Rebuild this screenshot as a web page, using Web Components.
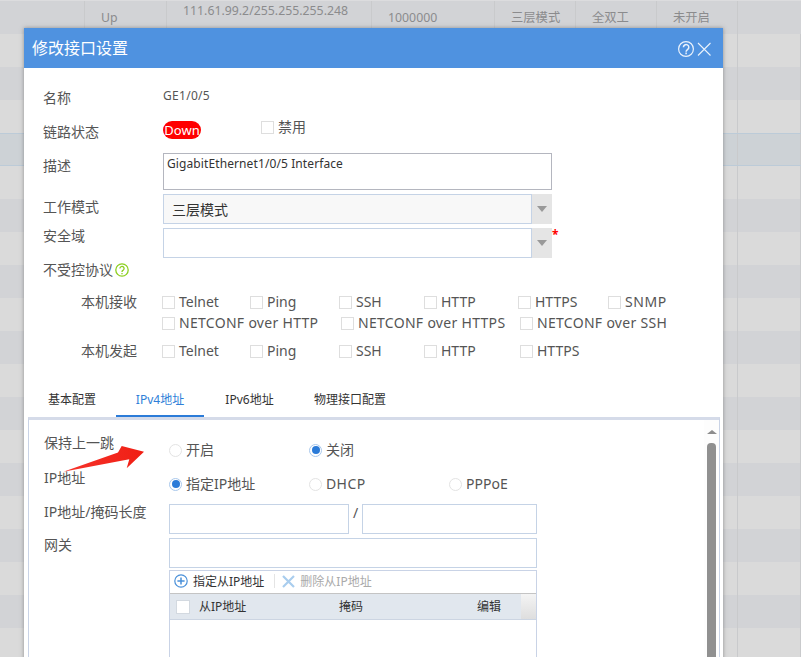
<!DOCTYPE html>
<html lang="zh">
<head>
<meta charset="utf-8">
<title>修改接口设置</title>
<style>
  html, body { margin: 0; height: 657px; overflow: hidden; }
  body { font-family: "Noto Sans", "Noto Sans CJK SC", sans-serif; font-size: 14px; color: #555; position: relative; }
</style>
</head>
<body>
<table-backdrop></table-backdrop>

<modal-dialog heading="修改接口设置">
  <form-row style="margin-top:12px;height:34px;--lt:8px;--vt:6px">
    <span slot="label">名称</span>
    <span style="font-size:12px;line-height:20px;display:block;letter-spacing:.3px">GE1/0/5</span>
  </form-row>
  <form-row style="height:34px;--lt:8px;--vt:7px">
    <span slot="label">链路状态</span>
    <link-state></link-state>
  </form-row>
  <form-row style="margin-top:5px;height:37px;--lt:3px">
    <span slot="label">描述</span>
    <text-box multiline style="letter-spacing:.1px">GigabitEthernet1/0/5 Interface</text-box>
  </form-row>
  <form-row style="margin-top:4px;height:30px;--lt:3px">
    <span slot="label">工作模式</span>
    <select-box disabled>三层模式</select-box>
  </form-row>
  <form-row style="margin-top:4px;height:30px;--lt:-2px">
    <span slot="label">安全域</span>
    <select-box required></select-box>
  </form-row>
  <form-row style="margin-top:2px;height:20px">
    <span slot="label" style="white-space:nowrap;display:flex;align-items:center;gap:2px">不受控协议<help-icon></help-icon></span>
  </form-row>

  <proto-row label="本机接收" style="margin-top:12px">
    <check-item style="width:88px">Telnet</check-item>
    <check-item style="width:89px">Ping</check-item>
    <check-item style="width:85px">SSH</check-item>
    <check-item style="width:94px">HTTP</check-item>
    <check-item style="width:90px">HTTPS</check-item>
    <check-item style="letter-spacing:.6px">SNMP</check-item>
  </proto-row>
  <proto-row style="margin-top:1px">
    <check-item style="width:179px;letter-spacing:.3px">NETCONF over HTTP</check-item>
    <check-item style="width:179px;letter-spacing:.3px">NETCONF over HTTPS</check-item>
    <check-item style="letter-spacing:.3px">NETCONF over SSH</check-item>
  </proto-row>
  <proto-row label="本机发起" style="margin-top:8px">
    <check-item style="width:88px">Telnet</check-item>
    <check-item style="width:89px">Ping</check-item>
    <check-item style="width:85px">SSH</check-item>
    <check-item style="width:96px">HTTP</check-item>
    <check-item>HTTPS</check-item>
  </proto-row>

  <tab-strip style="margin-top:22px">
    <tab-item style="width:88px">基本配置</tab-item>
    <tab-item active style="width:88px">IPv4地址</tab-item>
    <tab-item style="width:91px">IPv6地址</tab-item>
    <tab-item style="width:110px">物理接口配置</tab-item>
  </tab-strip>

  <scroll-panel>
    <form-row style="margin-top:13px;height:27px;--lw:125px;--vt:7px">
      <span slot="label">保持上一跳</span>
      <radio-group>
        <radio-item>开启</radio-item>
        <radio-item checked>关闭</radio-item>
      </radio-group>
    </form-row>
    <form-row style="margin-top:8px;height:26px;--lw:125px;--vt:6px">
      <span slot="label">IP地址</span>
      <radio-group>
        <radio-item checked>指定IP地址</radio-item>
        <radio-item style="letter-spacing:.4px">DHCP</radio-item>
        <radio-item>PPPoE</radio-item>
      </radio-group>
    </form-row>
    <form-row style="margin-top:10px;height:30px;--lw:125px;--lt:-2px">
      <span slot="label" style="white-space:nowrap">IP地址/掩码长度</span>
      <div style="display:flex;width:368px;align-items:flex-start">
        <text-box style="width:180px"></text-box>
        <span style="width:13px;text-align:center;line-height:18px">/</span>
        <text-box style="width:175px"></text-box>
      </div>
    </form-row>
    <form-row style="margin-top:4px;height:30px;--lw:125px;--lt:-3px">
      <span slot="label">网关</span>
      <text-box style="width:368px"></text-box>
    </form-row>
    <form-row style="margin-top:2px;--lw:125px">
      <span slot="label"></span>
      <address-grid></address-grid>
    </form-row>
  </scroll-panel>
</modal-dialog>

<red-arrow></red-arrow>

<script>
const define = (name, css, html, setup) => {
  customElements.define(name, class extends HTMLElement {
    connectedCallback() {
      if (this.shadowRoot) return;
      this.attachShadow({ mode: 'open' });
      const body = typeof html === 'function' ? html(this) : html;
      this.shadowRoot.innerHTML = `<style>${css}</style>${body}`;
      if (setup) setup(this);
    }
  });
};

// table behind the dialog
const COLS = '85px 82px 205px 123px 81px 81px 81px 63px';
define('table-backdrop', `
  :host { display: block; position: absolute; inset: 0; overflow: hidden; background: #dadada; color: #8b8b8d; font-size: 12.3px; }
  .row { display: grid; grid-template-columns: ${COLS}; height: 33px; box-sizing: border-box; }
  .row.first { height: 34px; background: #d2d3d6; border-top: 1px solid #dcdcde; }
  .row.dark { background: #d2d3d6; }
  .row.sel { background: #cdd2d6; border-top: 1px solid #bccbd8; border-bottom: 1px solid #bccbd8; }
  .c { border-right: 1px solid #c9cacc; padding-left: 16px; line-height: 33px; overflow: hidden; white-space: nowrap; height: 100%; box-sizing: border-box; }
  .addr { line-height: 17px; white-space: normal; padding-top: 1px; }
`, () => {
  let rows = `<div class="row first">
    <div class="c"></div><div class="c">Up</div>
    <div class="c addr">111.61.99.2/255.255.255.248<br>--</div>
    <div class="c">1000000</div><div class="c">三层模式</div><div class="c">全双工</div><div class="c">未开启</div><div class="c" style="border:0"></div>
  </div>`;
  for (let i = 1; i < 20; i++) {
    const cls = i === 4 ? 'sel' : (i % 2 === 0 ? 'dark' : '');
    rows += `<div class="row ${cls}">${'<div class="c"></div>'.repeat(8)}</div>`;
  }
  return rows;
});

define('modal-dialog', `
  :host { display: block; position: absolute; left: 24px; top: 28px; width: 699px; height: 700px; background: #fff; box-shadow: 0 0 4px rgba(80,80,80,.55); }
  header { height: 40px; box-sizing: border-box; background: #4f92e0; color: #fff; display: flex; align-items: center; padding: 0 12px 2px 8px; font-size: 16px; }
  h1 { font: inherit; margin: 0; flex: 1; }
  .body { padding: 0 4px; }
  svg { display: block; margin-top: 3px; }
`, el => `
  <header>
    <h1>${el.getAttribute('heading')}</h1>
    <svg width="36" height="18" viewBox="0 0 36 18" fill="none" stroke="#eaf2fc">
      <circle cx="11" cy="9" r="7.4" stroke-width="1.2"/>
      <path d="M8.4 7.2a2.7 2.6 0 1 1 4.3 2.1c-1 .7-1.6 1.2-1.6 2.4" stroke-width="1.5"/>
      <path d="M11.1 12.6v1.6" stroke-width="1.5"/>
      <path d="M23 3l12.5 12.5M35.5 3L23 15.5" stroke-width="1.1"/>
    </svg>
  </header>
  <div class="body"><slot></slot></div>
`);

define('form-row', `
  :host { display: grid; grid-template-columns: var(--lw, 120px) 1fr; padding-left: var(--lp, 15px); }
  .l { margin-top: var(--lt, 0); line-height: 20px; color: #555; height: 20px; }
  .v { margin-top: var(--vt, 0); min-width: 0; }
`, `<div class="l"><slot name="label"></slot></div><div class="v"><slot></slot></div>`);

define('link-state', `
  :host { display: flex; align-items: flex-start; }
  .badge { width: 38px; height: 18px; border-radius: 9px; background: #f00; color: #fff; font-size: 13px; line-height: 18px; text-align: center; }
  .dis { margin-left: 60px; margin-top: -4px; }
`, `<div class="badge">Down</div><check-item class="dis">禁用</check-item>`);

define('text-box', `
  :host { display: block; box-sizing: border-box; height: 30px; border: 1px solid #c5d3e6; background: #fff; color: #333; }
  :host([multiline]) { width: 389px; height: 37px; border-color: #b4b6bf; padding: 1px 3px; font-size: 12px; line-height: 18px; }
`, `<slot></slot>`);

define('select-box', `
  :host { display: flex; width: 389px; height: 30px; position: relative; }
  .f { flex: 1; box-sizing: border-box; border: 1px solid #c5d3e6; background: #fff; padding-left: 8px; line-height: 30px; color: #333; }
  :host([disabled]) .f { background: #f8f8f8; }
  .b { width: 20px; background: #e5e5e5; display: flex; align-items: center; justify-content: center; }
  .b i { border: 5px solid transparent; border-top: 6px solid #999; border-bottom: 0; }
  .star { position: absolute; left: 389px; top: 1px; color: #f00; font-size: 12px; font-weight: 700; line-height: 12px; }
`, el => `<div class="f"><slot></slot></div><div class="b"><i></i></div>${el.hasAttribute('required') ? '<span class="star">*</span>' : ''}`);

define('help-icon', `
  :host { display: block; width: 14px; height: 14px; }
  svg { display: block; }
`, `<svg width="14" height="14" viewBox="0 0 14 14" fill="none" stroke="#8ccf1f">
  <circle cx="7" cy="7" r="6.2" stroke-width="1.3"/>
  <path d="M4.9 5.4a2.1 2 0 1 1 3.3 1.7c-.8.5-1.2.9-1.2 1.8" stroke-width="1.3"/>
  <path d="M7 10v1.3" stroke-width="1.3"/>
</svg>`);

define('check-item', `
  :host { display: inline-flex; align-items: center; gap: 4px; line-height: 20px; white-space: nowrap; color: #555; }
  i { width: 13px; height: 13px; box-sizing: border-box; border: 1px solid #dedede; background: #fff; flex: none; }
`, `<i></i><slot></slot>`);

define('proto-row', `
  :host { display: grid; grid-template-columns: 81px 1fr; height: 20px; padding-left: 53px; line-height: 20px; color: #555; }
  .i { display: flex; }
`, el => `<div>${el.getAttribute('label') || ''}</div><div class="i"><slot></slot></div>`);

define('tab-strip', `:host { display: flex; height: 34px; }`, `<slot></slot>`);

define('tab-item', `
  :host { display: block; box-sizing: border-box; height: 34px; font-size: 12px; line-height: 33px; text-align: center; color: #333; border-bottom: 2px solid transparent; }
  :host([active]) { color: #2f7fd8; border-bottom-color: #2b7bd8; }
`, `<slot></slot>`);

define('scroll-panel', `
  :host { display: flex; box-sizing: border-box; width: 692px; height: 300px; border: 1px solid #c9d3e6; border-top: 3px solid #d5dbe9; }
  .m { flex: 1; min-width: 0; }
  .s { width: 15px; background: #fdfdfd; display: flex; flex-direction: column; align-items: center; }
  .s i { margin-top: 10px; border: 5px solid transparent; border-top: 0; border-bottom: 4px solid #8d8d8d; }
  .s b { width: 9px; height: 260px; margin-top: 9px; background: #909090; border-radius: 4px 4px 0 0; }
`, `<div class="m"><slot></slot></div><div class="s"><i></i><b></b></div>`);

define('radio-group', `:host { display: flex; }`, `<slot></slot>`);

define('radio-item', `
  :host { display: flex; align-items: center; gap: 4px; width: 140px; line-height: 20px; color: #555; white-space: nowrap; }
  i { width: 13px; height: 13px; box-sizing: border-box; border: 1px solid #e3e3e3; border-radius: 50%; background: #fff; flex: none; position: relative; }
  :host([checked]) i { border-color: #a9c8ec; }
  :host([checked]) i::after { content: ""; position: absolute; inset: 1.5px; border-radius: 50%; background: #2b7bd8; }
`, `<i></i><slot></slot>`);

define('address-grid', `
  :host { display: block; box-sizing: border-box; width: 368px; height: 130px; border: 1px solid #c9d3e6; border-bottom: 0; font-size: 12px; color: #333; }
  .bar { height: 22px; box-sizing: border-box; padding: 0 0 2px 4px; display: flex; align-items: center; }
  .bar svg { display: block; flex: none; }
  .bar span { margin-left: 5px; }
  .sep { width: 1px; height: 14px; background: #e4e4e4; margin: 0 7px 0 10px; }
  .off { color: #aaa; }
  .head { display: grid; grid-template-columns: 29px 140px 138px 44px 1fr; height: 27px; box-sizing: border-box; background: #e1e7ee; border-top: 1px solid #c4c4c4; border-bottom: 1px solid #ccd5e2; line-height: 25px; }
  .head .cb { display: flex; align-items: center; padding-left: 6px; }
  .head i { display: block; width: 14px; height: 14px; background: #fff; border: 1px solid #d3d9e0; box-sizing: border-box; }
  .head .sc { background: linear-gradient(#f4f4f4, #dedede); }
`, `
  <div class="bar">
    <svg width="14" height="14" viewBox="0 0 14 14" fill="none" stroke="#4a90d9"><circle cx="7" cy="7" r="6.2" stroke-width="1.2"/><path d="M7 3.4v7.2M3.4 7h7.2" stroke-width="1.5"/></svg>
    <span>指定从IP地址</span><div class="sep"></div>
    <svg width="13" height="13" viewBox="0 0 13 13" fill="none" stroke="#a9cdee"><path d="M1 1l11 11M12 1L1 12" stroke-width="2.2"/></svg>
    <span class="off">删除从IP地址</span>
  </div>
  <div class="head">
    <div class="cb"><i></i></div><div>从IP地址</div><div>掩码</div><div>编辑</div><div class="sc"></div>
  </div>
`);

// annotation drawn on top of the screenshot
define('red-arrow', `
  :host { display: block; position: absolute; left: 60px; top: 444px; width: 88px; height: 30px; pointer-events: none; }
  svg { display: block; }
`, `<svg width="88" height="30" viewBox="0 0 88 30">
  <defs><linearGradient id="g" x1="0" x2="1"><stop offset="0" stop-color="#f6332b"/><stop offset="1" stop-color="#f01f14"/></linearGradient></defs>
  <polygon fill="url(#g)" points="3.3,27.7 58,8.5 61.7,2 84,7.7 66.7,24.3 69.3,15.3"/>
</svg>`);
</script>
</body>
</html>
